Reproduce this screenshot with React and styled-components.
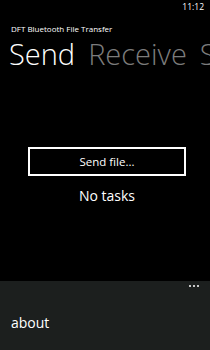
import React from "react";
import styled, { createGlobalStyle } from "styled-components";

const GlobalStyle = createGlobalStyle`
  html, body {
    margin: 0;
    padding: 0;
    background: #000;
  }
  body {
    font-family: "Open Sans", "Noto Sans", sans-serif;
    color: #fff;
  }
`;

const Phone = styled.div`
  width: 210px;
  height: 350px;
  background: #000;
  display: flex;
  flex-direction: column;
  overflow: hidden;
`;

const StatusBar = styled.div`
  height: 14px;
  box-sizing: border-box;
  padding: 2px 6px 0 0;
  display: flex;
  justify-content: flex-end;
  font-size: 8.5px;
  line-height: 10px;
  color: #fff;
`;

const AppTitle = styled.div`
  margin: 10px 0 0 11px;
  font-size: 8px;
  line-height: 10px;
  color: #fff;
  white-space: nowrap;
`;

const PivotRow = styled.div`
  display: flex;
  gap: 13px;
  margin: 2px 0 0 9px;
  white-space: nowrap;
  font-size: 29px;
  font-weight: 300;
  line-height: 36px;
`;

const PivotHeader = styled.span`
  color: ${({ active }) => (active ? "#fff" : "#7c7c7c")};
`;

const Content = styled.div`
  flex: 1;
  display: flex;
  flex-direction: column;
  align-items: center;
  padding: 75px 0 0 4px;
`;

const Button = styled.button`
  width: 158px;
  height: 29px;
  background: transparent;
  border: 2px solid #fff;
  color: #fff;
  font-family: inherit;
  font-size: 11.5px;
  padding: 0;
  cursor: pointer;
`;

const Status = styled.div`
  margin-top: 12px;
  font-size: 14px;
  line-height: 16px;
`;

const AppBar = styled.div`
  height: 69px;
  background: #1c1f1e;
  display: flex;
  flex-direction: column;
`;

const Dots = styled.div`
  display: flex;
  justify-content: flex-end;
  gap: 2px;
  padding: 4px 11px 0 0;
`;

const Dot = styled.span`
  width: 2px;
  height: 2px;
  border-radius: 50%;
  background: #fff;
`;

const MenuItem = styled.div`
  margin: 28px 0 0 11px;
  font-size: 14px;
  line-height: 16px;
  color: #fff;
`;

export default function App() {
  return (
    <Phone>
      <GlobalStyle />
      <StatusBar>11:12</StatusBar>
      <AppTitle>DFT Bluetooth File Transfer</AppTitle>
      <PivotRow>
        <PivotHeader active>Send</PivotHeader>
        <PivotHeader>Receive</PivotHeader>
        <PivotHeader>Settings</PivotHeader>
      </PivotRow>
      <Content>
        <Button>Send file...</Button>
        <Status>No tasks</Status>
      </Content>
      <AppBar>
        <Dots>
          <Dot />
          <Dot />
          <Dot />
        </Dots>
        <MenuItem>about</MenuItem>
      </AppBar>
    </Phone>
  );
}
